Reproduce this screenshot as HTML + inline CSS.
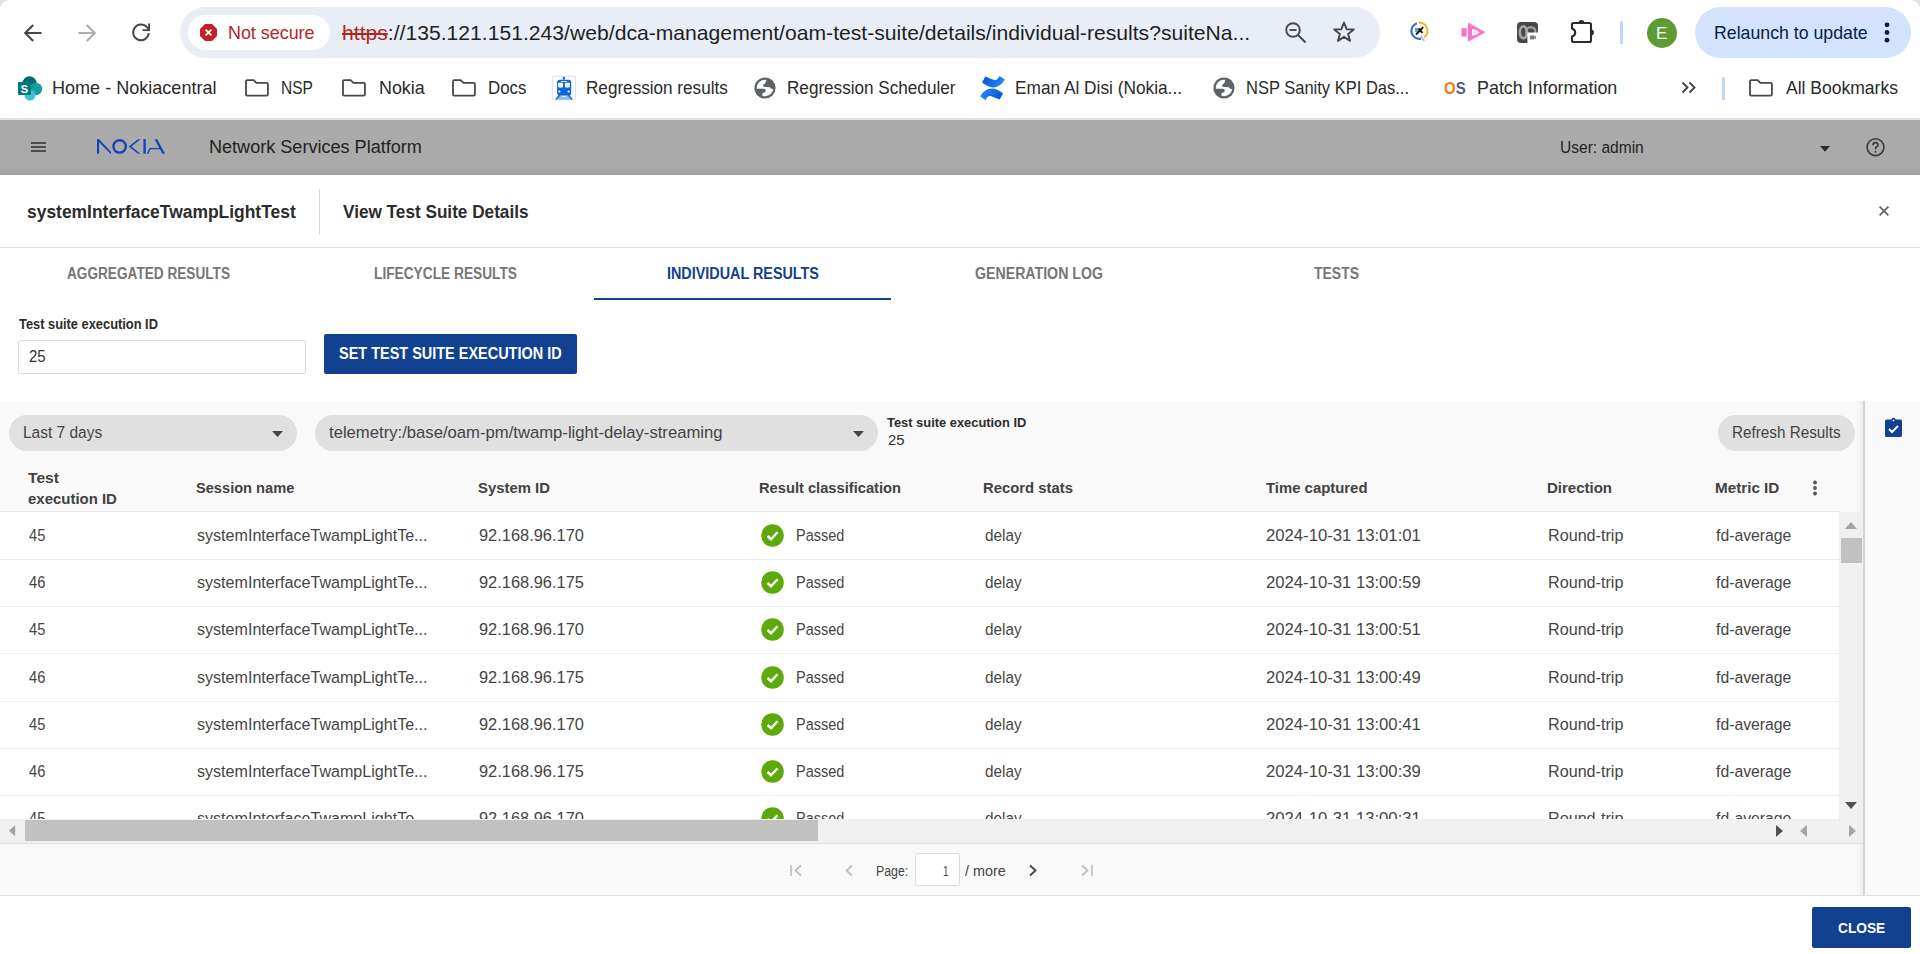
<!DOCTYPE html>
<html><head><meta charset="utf-8">
<style>
html,body{margin:0;padding:0;width:1920px;height:954px;overflow:hidden;background:#fff;}
body{position:relative;font-family:"Liberation Sans",sans-serif;}
.t{position:absolute;white-space:nowrap;font-family:"Liberation Sans",sans-serif;}
.r{position:absolute;}
svg{position:absolute;overflow:visible;}
</style></head><body>
<div class="r" style="left:0px;top:0px;width:9px;height:9px;background:radial-gradient(circle at 9px 9px,#fff 8.2px,#dde3ea 9.2px);"></div>
<div class="r" style="left:1911px;top:0px;width:9px;height:9px;background:radial-gradient(circle at 0px 9px,#fff 8.2px,#dde3ea 9.2px);"></div>
<svg style="left:23px;top:23.5px" width="20" height="19" viewBox="0 0 20 19"><path d="M18.6 9H2.2M10.2 1L2.2 9L10.2 17" fill="none" stroke="#474747" stroke-width="2.1"/></svg>
<svg style="left:77px;top:23.5px" width="20" height="19" viewBox="0 0 20 19"><path d="M1.4 9H17.8M9.8 1L17.8 9L9.8 17" fill="none" stroke="#adadad" stroke-width="2.1"/></svg>
<svg style="left:126px;top:18px" width="30" height="28" viewBox="0 0 30 28"><path d="M22.81 15.22A7.85 7.85 0 1 1 21.01 9.35" fill="none" stroke="#474747" stroke-width="1.9"/><path d="M23.1 5.6V12.1H16.5" fill="none" stroke="#474747" stroke-width="1.9"/><path d="M19.6 9.6L23.5 12.6V8.2Z" fill="#474747"/></svg>
<div class="r" style="left:180px;top:7px;width:1200px;height:51px;background:#e9eef6;border-radius:26px;"></div>
<div class="r" style="left:188px;top:15px;width:142px;height:35px;background:#ffffff;border-radius:18px;"></div>
<svg style="left:200px;top:24px" width="17" height="17" viewBox="0 0 17 17"><path d="M5 0H12L17 5V12L12 17H5L0 12V5Z" fill="#c5221f"/><path d="M5.6 5.6L11.4 11.4M11.4 5.6L5.6 11.4" stroke="#fff" stroke-width="1.8"/></svg>
<div class="t" style="left:227.50px;top:24.00px;font-size:18.5px;line-height:18.5px;font-weight:400;color:#b3261e;transform:scaleX(0.9670);transform-origin:0 0;">Not secure</div>
<div class="t" style="left:342.00px;top:23.00px;font-size:20.3px;line-height:20.3px;font-weight:400;color:#1f1f1f;transform:scaleX(1.0421);transform-origin:0 0;"><span style="color:#b3261e;text-decoration:line-through;">https</span>://135.121.151.243/web/dca-management/oam-test-suite/details/individual-results?suiteNa...</div>
<svg style="left:1285px;top:22px" width="22" height="21" viewBox="0 0 22 21"><circle cx="8" cy="8" r="6.8" fill="none" stroke="#474747" stroke-width="1.9"/><path d="M4.5 8H11.5" stroke="#474747" stroke-width="1.9"/><path d="M13 13L20.5 20.5" stroke="#474747" stroke-width="2"/></svg>
<svg style="left:1332px;top:21px" width="24" height="22" viewBox="0 0 24 22"><path d="M12 1.5L14.6 8.2L21.8 8.4L16.1 12.9L18.1 19.9L12 15.9L5.9 19.9L7.9 12.9L2.2 8.4L9.4 8.2Z" fill="none" stroke="#474747" stroke-width="1.9" stroke-linejoin="round"/></svg>
<svg style="left:1404px;top:16px" width="32" height="32" viewBox="0 0 32 32"><path d="M14.6 6.85A8 8 0 0 1 19.99 21.35" fill="none" stroke="#f7b928" stroke-width="2.1"/><path d="M17.06 22.63A8 8 0 0 1 12.9 7.2" fill="none" stroke="#2f6fd6" stroke-width="2.1"/><path d="M11 12H13.5L14.6 14L13.5 15.8H11Z" fill="#3aa3f2"/><path d="M12 18.5L19.2 11.2M14.5 12.5L18.5 16.8" stroke="#111" stroke-width="1.9"/><path d="M16.5 19.5L20.3 25" stroke="#b8bcc4" stroke-width="1.6"/></svg>
<svg style="left:1461px;top:22px" width="25" height="21" viewBox="0 0 25 21"><path d="M0.5 6.2H5.7V14.6H0.5Z" fill="#f774c8"/><path d="M7 0.5L24.4 10.2L7 19.8Z" fill="#f774c8"/><path d="M11 7.3H13.6V13.5H11Z M14.2 7.3L18.5 10.3L14.2 13.5Z" fill="#fff"/></svg>
<svg style="left:1512px;top:16px" width="32" height="32" viewBox="0 0 32 32"><rect x="5" y="5.9" width="21" height="21" rx="4" fill="#474747"/><ellipse cx="18.8" cy="15.6" rx="4.6" ry="4.4" fill="none" stroke="#9c9c9c" stroke-width="2.4"/><ellipse cx="11.4" cy="16.3" rx="3.6" ry="5.9" fill="none" stroke="#a4a4a4" stroke-width="2.6"/><path d="M15.4 16.4H26.6V24.8Q26.6 27.2 24.2 27.2H15.4Z" fill="#fff"/><rect x="18" y="19.4" width="4.3" height="4" fill="#7a7a7a"/><path d="M22.3 20.4L23.9 19.6V23.2L22.3 22.4Z" fill="#7a7a7a"/></svg>
<svg style="left:1570px;top:18px" width="26" height="26" viewBox="0 0 26 26"><path d="M3.5 5H19.5Q21 5 21 6.5V22.5Q21 24 19.5 24H3.5Q2 24 2 22.5V18.6Q5.2 17.6 5.2 14.5Q5.2 11.4 2 10.4V6.5Q2 5 3.5 5Z" fill="none" stroke="#2b2b2b" stroke-width="2.1" stroke-linejoin="round"/><path d="M8.6 5A2.9 2.9 0 0 1 14.4 5Z M21 11.6A2.9 2.9 0 0 1 21 17.4Z" fill="#2b2b2b"/></svg>
<div class="r" style="left:1620px;top:21px;width:3px;height:23px;background:#c2d6f7;border-radius:1px;"></div>
<div class="r" style="left:1647px;top:18px;width:30px;height:30px;background:#5e9c33;border-radius:50%;"></div>
<div class="t" style="left:1656.00px;top:25.00px;font-size:17px;line-height:17px;font-weight:400;color:#ffffff;">E</div>
<div class="r" style="left:1695px;top:7px;width:216px;height:51px;background:#d3e3fd;border-radius:26px;"></div>
<div class="t" style="left:1713.80px;top:24.00px;font-size:18.5px;line-height:18.5px;font-weight:400;color:#041e49;transform:scaleX(0.9579);transform-origin:0 0;">Relaunch to update</div>
<svg style="left:1884px;top:22px" width="6" height="21" viewBox="0 0 6 21"><circle cx="3" cy="2.8" r="2.4" fill="#041e49"/><circle cx="3" cy="10.5" r="2.4" fill="#041e49"/><circle cx="3" cy="18.2" r="2.4" fill="#041e49"/></svg>
<svg style="left:18px;top:76px" width="25" height="25" viewBox="0 0 25 25"><circle cx="11.5" cy="7.5" r="7.2" fill="#036c70"/><circle cx="18" cy="13" r="6.2" fill="#1a9ba1"/><circle cx="12" cy="19" r="5.5" fill="#37c6d0"/><rect x="0" y="6" width="13" height="13" rx="1" fill="#03787c"/><text x="6.5" y="16.5" font-family="Liberation Sans" font-weight="700" font-size="11" fill="#fff" text-anchor="middle">S</text></svg>
<div class="t" style="left:51.50px;top:79.00px;font-size:18.5px;line-height:18.5px;font-weight:400;color:#2a2a2a;transform:scaleX(0.9757);transform-origin:0 0;">Home - Nokiacentral</div>
<svg style="left:245px;top:79px" width="25" height="19" viewBox="0 0 25 19"><path d="M1 2.3Q1 1.1 2.2 1.1H8.6L11.4 3.9H21.7Q22.9 3.9 22.9 5.1V15.4Q22.9 16.6 21.7 16.6H2.2Q1 16.6 1 15.4Z" fill="none" stroke="#474747" stroke-width="1.8" stroke-linejoin="round"/></svg>
<div class="t" style="left:281.30px;top:79.00px;font-size:18.5px;line-height:18.5px;font-weight:400;color:#2a2a2a;transform:scaleX(0.8357);transform-origin:0 0;">NSP</div>
<svg style="left:342px;top:79px" width="25" height="19" viewBox="0 0 25 19"><path d="M1 2.3Q1 1.1 2.2 1.1H8.6L11.4 3.9H21.7Q22.9 3.9 22.9 5.1V15.4Q22.9 16.6 21.7 16.6H2.2Q1 16.6 1 15.4Z" fill="none" stroke="#474747" stroke-width="1.8" stroke-linejoin="round"/></svg>
<div class="t" style="left:378.50px;top:79.00px;font-size:18.5px;line-height:18.5px;font-weight:400;color:#2a2a2a;transform:scaleX(0.9662);transform-origin:0 0;">Nokia</div>
<svg style="left:452px;top:79px" width="25" height="19" viewBox="0 0 25 19"><path d="M1 2.3Q1 1.1 2.2 1.1H8.6L11.4 3.9H21.7Q22.9 3.9 22.9 5.1V15.4Q22.9 16.6 21.7 16.6H2.2Q1 16.6 1 15.4Z" fill="none" stroke="#474747" stroke-width="1.8" stroke-linejoin="round"/></svg>
<div class="t" style="left:488.30px;top:79.00px;font-size:18.5px;line-height:18.5px;font-weight:400;color:#2a2a2a;transform:scaleX(0.9110);transform-origin:0 0;">Docs</div>
<svg style="left:548px;top:72px" width="32" height="32" viewBox="0 0 32 32"><rect x="4.3" y="4.3" width="23.4" height="23.4" rx="1.2" fill="#fff" stroke="#c9dcf6" stroke-width="0.9"/><path d="M12 23.5H20L22.5 27.8H9.5Z" fill="#8fb9ea"/><path d="M11.8 23L8 27.6M20.2 23L24 27.6" stroke="#0b66d8" stroke-width="1.6"/><circle cx="15.9" cy="6" r="1.2" fill="#0b66d8"/><rect x="15.4" y="6" width="1" height="2" fill="#0b66d8"/><rect x="9.1" y="7.7" width="14.1" height="15.8" rx="2.6" fill="#0b66d8"/><rect x="10.1" y="10.7" width="4.9" height="4.7" rx="0.9" fill="#fff"/><rect x="16.9" y="10.7" width="4.9" height="4.7" rx="0.9" fill="#fff"/><rect x="13" y="9" width="5.8" height="0.9" fill="#fff"/><circle cx="11.4" cy="19.5" r="1.1" fill="#fff"/><circle cx="20.6" cy="19.5" r="1.1" fill="#fff"/><rect x="14" y="24" width="4" height="0.8" fill="#fff"/></svg>
<div class="t" style="left:585.50px;top:79.00px;font-size:18.5px;line-height:18.5px;font-weight:400;color:#2a2a2a;transform:scaleX(0.9256);transform-origin:0 0;">Regression results</div>
<svg style="left:754.1px;top:76.6px" width="22" height="22" viewBox="0 0 22 22"><defs><clipPath id="gc754"><circle cx="11" cy="11" r="9"/></clipPath></defs><circle cx="11" cy="11" r="10.6" fill="#5f6368"/><circle cx="11" cy="11" r="8.3" fill="#fff"/><g clip-path="url(#gc754)" fill="#5f6368"><g transform="translate(0.5,0.5)"><path d="M8.6 8.2Q8.6 6.4 10.6 5.9L12 2.5H21V11.2Q20 11.8 17.8 11.6Q16 11.5 15.5 9.8Q13.5 9.3 10.5 9.4Q8.6 9.4 8.6 8.2Z"/><path d="M0 11.2H9.5Q11.3 11.4 11.2 13.5Q11.1 15.2 9.2 15.3Q7.8 15.5 7.8 17.2V21H0Z"/></g></g></svg>
<div class="t" style="left:786.80px;top:79.00px;font-size:18.5px;line-height:18.5px;font-weight:400;color:#2a2a2a;transform:scaleX(0.9253);transform-origin:0 0;">Regression Scheduler</div>
<svg style="left:975px;top:72px" width="35" height="32" viewBox="0 0 35 32"><defs><linearGradient id="cfa" x1="0" y1="0" x2="1" y2="0.3"><stop offset="0" stop-color="#0052cc"/><stop offset="1" stop-color="#2684ff"/></linearGradient><linearGradient id="cfb" x1="1" y1="1" x2="0" y2="0.7"><stop offset="0" stop-color="#0052cc"/><stop offset="1" stop-color="#2684ff"/></linearGradient></defs><path d="M10.3 4.4Q15 6.5 19.5 8Q22.5 8.5 24.4 4.1L29.8 7.6Q25.5 15.5 18 15.4Q13 15.2 7 10.6Z" fill="url(#cfa)"/><path d="M24.7 27.6Q20 25.5 15.5 24Q12.5 23.5 10.6 27.9L5.2 24.4Q9.5 16.5 17 16.6Q22 16.8 28 21.4Z" fill="url(#cfb)"/></svg>
<div class="t" style="left:1015.00px;top:79.00px;font-size:18.5px;line-height:18.5px;font-weight:400;color:#2a2a2a;transform:scaleX(0.9335);transform-origin:0 0;">Eman Al Disi (Nokia...</div>
<svg style="left:1213.1px;top:76.6px" width="22" height="22" viewBox="0 0 22 22"><defs><clipPath id="gc1213"><circle cx="11" cy="11" r="9"/></clipPath></defs><circle cx="11" cy="11" r="10.6" fill="#5f6368"/><circle cx="11" cy="11" r="8.3" fill="#fff"/><g clip-path="url(#gc1213)" fill="#5f6368"><g transform="translate(0.5,0.5)"><path d="M8.6 8.2Q8.6 6.4 10.6 5.9L12 2.5H21V11.2Q20 11.8 17.8 11.6Q16 11.5 15.5 9.8Q13.5 9.3 10.5 9.4Q8.6 9.4 8.6 8.2Z"/><path d="M0 11.2H9.5Q11.3 11.4 11.2 13.5Q11.1 15.2 9.2 15.3Q7.8 15.5 7.8 17.2V21H0Z"/></g></g></svg>
<div class="t" style="left:1245.50px;top:79.00px;font-size:18.5px;line-height:18.5px;font-weight:400;color:#2a2a2a;transform:scaleX(0.8922);transform-origin:0 0;">NSP Sanity KPI Das...</div>
<div class="t" style="left:1444.00px;top:81.00px;font-size:16.8px;line-height:16.8px;font-weight:700;color:#ee7d1c;transform:scaleX(0.8948);transform-origin:0 0;"><span style="color:#ee7d1c">O</span><span style="color:#4c6382">S</span></div>
<div class="t" style="left:1476.70px;top:79.00px;font-size:18.5px;line-height:18.5px;font-weight:400;color:#2a2a2a;transform:scaleX(0.9676);transform-origin:0 0;">Patch Information</div>
<svg style="left:1681px;top:81px" width="15" height="13" viewBox="0 0 15 13"><path d="M1.5 1.5L6.5 6.5L1.5 11.5M8.5 1.5L13.5 6.5L8.5 11.5" fill="none" stroke="#474747" stroke-width="1.9"/></svg>
<div class="r" style="left:1722px;top:77px;width:3px;height:23px;background:#c2d6f7;border-radius:1px;"></div>
<svg style="left:1748.5px;top:79px" width="25" height="19" viewBox="0 0 25 19"><path d="M1 2.3Q1 1.1 2.2 1.1H8.6L11.4 3.9H21.7Q22.9 3.9 22.9 5.1V15.4Q22.9 16.6 21.7 16.6H2.2Q1 16.6 1 15.4Z" fill="none" stroke="#474747" stroke-width="1.8" stroke-linejoin="round"/></svg>
<div class="t" style="left:1785.50px;top:79.00px;font-size:18.5px;line-height:18.5px;font-weight:400;color:#2a2a2a;transform:scaleX(0.9471);transform-origin:0 0;">All Bookmarks</div>
<div class="r" style="left:0px;top:118px;width:1920px;height:2px;background:#e3e3e3;"></div>
<div class="r" style="left:0px;top:120px;width:1920px;height:55px;background:linear-gradient(#ababab 0%,#aaaaaa 85%,#9f9f9f 100%);"></div>
<div class="r" style="left:31px;top:142px;width:15px;height:2px;background:#4d4d4d;"></div>
<div class="r" style="left:31px;top:146px;width:15px;height:2px;background:#4d4d4d;"></div>
<div class="r" style="left:31px;top:150px;width:15px;height:2px;background:#4d4d4d;"></div>
<svg style="left:90px;top:132px" width="82" height="30" viewBox="0 0 82 30"><path d="M7 21.8V7L8.8 7L21 19.8V21.8H20.5L9.1 10.2V21.8Z" fill="#1444bd"/><circle cx="29.6" cy="14.4" r="6.2" fill="none" stroke="#1444bd" stroke-width="2.4"/><path d="M50.6 7.2H48L38.8 14.5L48 21.8H50.4L41.3 14.5Z" fill="#1444bd"/><rect x="53.4" y="7.1" width="2.4" height="14.7" fill="#1444bd"/><path d="M64.6 7.2H67.2L75 21.8H72.4Z M59.6 15.9H69.3L70.3 17.2H60.5L58.5 21.8H56.7Z" fill="#1444bd"/></svg>
<div class="t" style="left:208.60px;top:138.00px;font-size:18.9px;line-height:18.9px;font-weight:400;color:#222;transform:scaleX(0.9567);transform-origin:0 0;">Network Services Platform</div>
<div class="t" style="left:1560.25px;top:140.00px;font-size:16.9px;line-height:16.9px;font-weight:400;color:#222;transform:scaleX(0.9199);transform-origin:0 0;">User: admin</div>
<svg style="left:1819.5px;top:145.5px" width="10" height="6" viewBox="0 0 10 6"><path d="M0 0H10L5 5.8Z" fill="#2a2a2a"/></svg>
<svg style="left:1865px;top:137px" width="21" height="21" viewBox="0 0 21 21"><circle cx="10.5" cy="10.2" r="8.4" fill="none" stroke="#3a3a3a" stroke-width="1.6"/><path d="M8 8.2Q8 5.6 10.5 5.6Q13 5.6 13 7.8Q13 9.2 11.4 10Q10.5 10.5 10.5 12V12.3" fill="none" stroke="#3a3a3a" stroke-width="1.6"/><circle cx="10.5" cy="14.8" r="1" fill="#3a3a3a"/></svg>
<div class="t" style="left:27.00px;top:203.00px;font-size:18.8px;line-height:18.8px;font-weight:700;color:#2c2c2c;transform:scaleX(0.9284);transform-origin:0 0;">systemInterfaceTwampLightTest</div>
<div class="r" style="left:319px;top:189px;width:1px;height:45px;background:#d8d8d8;"></div>
<div class="t" style="left:342.80px;top:203.00px;font-size:18.8px;line-height:18.8px;font-weight:700;color:#2c2c2c;transform:scaleX(0.9146);transform-origin:0 0;">View Test Suite Details</div>
<svg style="left:1879.2px;top:206.2px" width="10" height="10" viewBox="0 0 10 10"><path d="M0.6 0.6L9.4 9.4M9.4 0.6L0.6 9.4" stroke="#666" stroke-width="1.8"/></svg>
<div class="r" style="left:0px;top:247px;width:1920px;height:1px;background:#e0e0e0;"></div>
<div class="t" style="left:66.80px;top:266.00px;font-size:15.8px;line-height:15.8px;font-weight:700;color:#767676;transform:scaleX(0.8624);transform-origin:0 0;">AGGREGATED RESULTS</div>
<div class="t" style="left:373.80px;top:266.00px;font-size:15.8px;line-height:15.8px;font-weight:700;color:#767676;transform:scaleX(0.8680);transform-origin:0 0;">LIFECYCLE RESULTS</div>
<div class="t" style="left:666.70px;top:266.00px;font-size:15.8px;line-height:15.8px;font-weight:700;color:#124191;transform:scaleX(0.9096);transform-origin:0 0;">INDIVIDUAL RESULTS</div>
<div class="t" style="left:975.40px;top:266.00px;font-size:15.8px;line-height:15.8px;font-weight:700;color:#767676;transform:scaleX(0.8964);transform-origin:0 0;">GENERATION LOG</div>
<div class="t" style="left:1314.00px;top:266.00px;font-size:15.8px;line-height:15.8px;font-weight:700;color:#767676;transform:scaleX(0.8841);transform-origin:0 0;">TESTS</div>
<div class="r" style="left:594px;top:298px;width:297px;height:2px;background:#124191;"></div>
<div class="t" style="left:18.80px;top:317.00px;font-size:14.8px;line-height:14.8px;font-weight:700;color:#2c2c2c;transform:scaleX(0.8682);transform-origin:0 0;">Test suite execution ID</div>
<div class="r" style="left:18px;top:340px;width:288px;height:34px;background:#fff;box-sizing:border-box;border:1px solid #dadada;border-radius:2px;"></div>
<div class="t" style="left:28.80px;top:348.00px;font-size:16.3px;line-height:16.3px;font-weight:400;color:#333;transform:scaleX(0.9201);transform-origin:0 0;">25</div>
<div class="r" style="left:324px;top:334px;width:253px;height:40px;background:#124191;border-radius:2px;"></div>
<div class="t" style="left:339.40px;top:346.00px;font-size:16px;line-height:16px;font-weight:700;color:#fff;transform:scaleX(0.9040);transform-origin:0 0;">SET TEST SUITE EXECUTION ID</div>
<div class="r" style="left:0px;top:401px;width:1864px;height:494px;background:#f9f9f9;"></div>
<div class="r" style="left:1864px;top:401px;width:56px;height:494px;background:#f9f9f9;"></div>
<div class="r" style="left:1857px;top:401px;width:6px;height:494px;background:linear-gradient(90deg,rgba(0,0,0,0),rgba(0,0,0,0.05));"></div>
<div class="r" style="left:1863px;top:401px;width:2px;height:494px;background:#d4d4d4;"></div>
<div class="r" style="left:9px;top:415px;width:288px;height:36px;background:#e0e0e0;border-radius:18px;"></div>
<div class="t" style="left:23.00px;top:424.00px;font-size:16.3px;line-height:16.3px;font-weight:400;color:#444;transform:scaleX(0.9514);transform-origin:0 0;">Last 7 days</div>
<svg style="left:272px;top:431px" width="11" height="6" viewBox="0 0 11 6"><path d="M0 0H11L5.5 6Z" fill="#444"/></svg>
<div class="r" style="left:315px;top:415px;width:563px;height:36px;background:#e0e0e0;border-radius:18px;"></div>
<div class="t" style="left:329.00px;top:424.00px;font-size:16.3px;line-height:16.3px;font-weight:400;color:#444;transform:scaleX(1.0234);transform-origin:0 0;">telemetry:/base/oam-pm/twamp-light-delay-streaming</div>
<svg style="left:853px;top:431px" width="11" height="6" viewBox="0 0 11 6"><path d="M0 0H11L5.5 6Z" fill="#444"/></svg>
<div class="t" style="left:887.30px;top:416.00px;font-size:13.4px;line-height:13.4px;font-weight:700;color:#2c2c2c;transform:scaleX(0.9617);transform-origin:0 0;">Test suite execution ID</div>
<div class="t" style="left:887.50px;top:432.00px;font-size:15.3px;line-height:15.3px;font-weight:400;color:#333;transform:scaleX(0.9706);transform-origin:0 0;">25</div>
<div class="r" style="left:1718px;top:415px;width:137px;height:36px;background:#e0e0e0;border-radius:18px;"></div>
<div class="t" style="left:1732.00px;top:424.00px;font-size:16.3px;line-height:16.3px;font-weight:400;color:#444;transform:scaleX(0.9375);transform-origin:0 0;">Refresh Results</div>
<svg style="left:1885px;top:418px" width="17" height="19" viewBox="0 0 17 19"><rect x="0" y="1.5" width="17" height="17.5" rx="1.6" fill="#124191"/><circle cx="8.5" cy="1.8" r="2" fill="#124191"/><circle cx="8.5" cy="2.6" r="0.9" fill="#fff"/><path d="M4 11L7 14L13 8" fill="none" stroke="#fff" stroke-width="2"/></svg>
<div class="t" style="left:27.70px;top:470.00px;font-size:15.3px;line-height:15.3px;font-weight:700;color:#424242;transform:scaleX(1.0214);transform-origin:0 0;">Test</div>
<div class="t" style="left:27.70px;top:491.00px;font-size:15.3px;line-height:15.3px;font-weight:700;color:#424242;transform:scaleX(0.9775);transform-origin:0 0;">execution ID</div>
<div class="t" style="left:196.20px;top:480.00px;font-size:15.3px;line-height:15.3px;font-weight:700;color:#424242;transform:scaleX(0.9553);transform-origin:0 0;">Session name</div>
<div class="t" style="left:477.50px;top:480.00px;font-size:15.3px;line-height:15.3px;font-weight:700;color:#424242;transform:scaleX(0.9730);transform-origin:0 0;">System ID</div>
<div class="t" style="left:759.20px;top:480.00px;font-size:15.3px;line-height:15.3px;font-weight:700;color:#424242;transform:scaleX(0.9598);transform-origin:0 0;">Result classification</div>
<div class="t" style="left:983.30px;top:480.00px;font-size:15.3px;line-height:15.3px;font-weight:700;color:#424242;transform:scaleX(0.9709);transform-origin:0 0;">Record stats</div>
<div class="t" style="left:1265.70px;top:480.00px;font-size:15.3px;line-height:15.3px;font-weight:700;color:#424242;transform:scaleX(0.9732);transform-origin:0 0;">Time captured</div>
<div class="t" style="left:1546.70px;top:480.00px;font-size:15.3px;line-height:15.3px;font-weight:700;color:#424242;transform:scaleX(0.9804);transform-origin:0 0;">Direction</div>
<div class="t" style="left:1715.30px;top:480.00px;font-size:15.3px;line-height:15.3px;font-weight:700;color:#424242;transform:scaleX(0.9954);transform-origin:0 0;">Metric ID</div>
<svg style="left:1812px;top:480px" width="6" height="16" viewBox="0 0 6 16"><circle cx="3" cy="2.5" r="1.9" fill="#555"/><circle cx="3" cy="8" r="1.9" fill="#555"/><circle cx="3" cy="13.5" r="1.9" fill="#555"/></svg>
<div class="r" style="left:0px;top:511px;width:1839px;height:1px;background:#e8e8e8;"></div>
<div style="position:absolute;left:0;top:512px;width:1839px;height:307px;overflow:hidden;background:#fff;">
<div class="t" style="left:28.90px;top:15.00px;font-size:16.3px;line-height:16.3px;font-weight:400;color:#454545;transform:scaleX(0.9036);transform-origin:0 0;">45</div>
<div class="t" style="left:197.10px;top:15.00px;font-size:16.3px;line-height:16.3px;font-weight:400;color:#454545;transform:scaleX(0.9874);transform-origin:0 0;">systemInterfaceTwampLightTe...</div>
<div class="t" style="left:478.60px;top:15.00px;font-size:16.3px;line-height:16.3px;font-weight:400;color:#454545;transform:scaleX(1.0072);transform-origin:0 0;">92.168.96.170</div>
<svg style="left:761px;top:12px" width="23" height="23" viewBox="0 0 23 23"><circle cx="11.5" cy="11.5" r="11.3" fill="#5fa80a"/><path d="M6.5 12L10 15.2L16.5 8.3" fill="none" stroke="#fff" stroke-width="2.4"/></svg>
<div class="t" style="left:796.20px;top:15.00px;font-size:16.3px;line-height:16.3px;font-weight:400;color:#454545;transform:scaleX(0.8887);transform-origin:0 0;">Passed</div>
<div class="t" style="left:984.70px;top:15.00px;font-size:16.3px;line-height:16.3px;font-weight:400;color:#454545;transform:scaleX(0.9397);transform-origin:0 0;">delay</div>
<div class="t" style="left:1265.70px;top:15.00px;font-size:16.3px;line-height:16.3px;font-weight:400;color:#454545;transform:scaleX(1.0241);transform-origin:0 0;">2024-10-31 13:01:01</div>
<div class="t" style="left:1547.60px;top:15.00px;font-size:16.3px;line-height:16.3px;font-weight:400;color:#454545;transform:scaleX(0.9921);transform-origin:0 0;">Round-trip</div>
<div class="t" style="left:1716.20px;top:15.00px;font-size:16.3px;line-height:16.3px;font-weight:400;color:#454545;transform:scaleX(0.9686);transform-origin:0 0;">fd-average</div>
<div class="r" style="left:0px;top:47px;width:1839px;height:1px;background:#ececec;"></div>
<div class="t" style="left:28.90px;top:62.00px;font-size:16.3px;line-height:16.3px;font-weight:400;color:#454545;transform:scaleX(0.9036);transform-origin:0 0;">46</div>
<div class="t" style="left:197.10px;top:62.00px;font-size:16.3px;line-height:16.3px;font-weight:400;color:#454545;transform:scaleX(0.9874);transform-origin:0 0;">systemInterfaceTwampLightTe...</div>
<div class="t" style="left:478.60px;top:62.00px;font-size:16.3px;line-height:16.3px;font-weight:400;color:#454545;transform:scaleX(1.0072);transform-origin:0 0;">92.168.96.175</div>
<svg style="left:761px;top:59px" width="23" height="23" viewBox="0 0 23 23"><circle cx="11.5" cy="11.5" r="11.3" fill="#5fa80a"/><path d="M6.5 12L10 15.2L16.5 8.3" fill="none" stroke="#fff" stroke-width="2.4"/></svg>
<div class="t" style="left:796.20px;top:62.00px;font-size:16.3px;line-height:16.3px;font-weight:400;color:#454545;transform:scaleX(0.8887);transform-origin:0 0;">Passed</div>
<div class="t" style="left:984.70px;top:62.00px;font-size:16.3px;line-height:16.3px;font-weight:400;color:#454545;transform:scaleX(0.9397);transform-origin:0 0;">delay</div>
<div class="t" style="left:1265.70px;top:62.00px;font-size:16.3px;line-height:16.3px;font-weight:400;color:#454545;transform:scaleX(1.0241);transform-origin:0 0;">2024-10-31 13:00:59</div>
<div class="t" style="left:1547.60px;top:62.00px;font-size:16.3px;line-height:16.3px;font-weight:400;color:#454545;transform:scaleX(0.9921);transform-origin:0 0;">Round-trip</div>
<div class="t" style="left:1716.20px;top:62.00px;font-size:16.3px;line-height:16.3px;font-weight:400;color:#454545;transform:scaleX(0.9686);transform-origin:0 0;">fd-average</div>
<div class="r" style="left:0px;top:94px;width:1839px;height:1px;background:#ececec;"></div>
<div class="t" style="left:28.90px;top:109.00px;font-size:16.3px;line-height:16.3px;font-weight:400;color:#454545;transform:scaleX(0.9036);transform-origin:0 0;">45</div>
<div class="t" style="left:197.10px;top:109.00px;font-size:16.3px;line-height:16.3px;font-weight:400;color:#454545;transform:scaleX(0.9874);transform-origin:0 0;">systemInterfaceTwampLightTe...</div>
<div class="t" style="left:478.60px;top:109.00px;font-size:16.3px;line-height:16.3px;font-weight:400;color:#454545;transform:scaleX(1.0072);transform-origin:0 0;">92.168.96.170</div>
<svg style="left:761px;top:106px" width="23" height="23" viewBox="0 0 23 23"><circle cx="11.5" cy="11.5" r="11.3" fill="#5fa80a"/><path d="M6.5 12L10 15.2L16.5 8.3" fill="none" stroke="#fff" stroke-width="2.4"/></svg>
<div class="t" style="left:796.20px;top:109.00px;font-size:16.3px;line-height:16.3px;font-weight:400;color:#454545;transform:scaleX(0.8887);transform-origin:0 0;">Passed</div>
<div class="t" style="left:984.70px;top:109.00px;font-size:16.3px;line-height:16.3px;font-weight:400;color:#454545;transform:scaleX(0.9397);transform-origin:0 0;">delay</div>
<div class="t" style="left:1265.70px;top:109.00px;font-size:16.3px;line-height:16.3px;font-weight:400;color:#454545;transform:scaleX(1.0241);transform-origin:0 0;">2024-10-31 13:00:51</div>
<div class="t" style="left:1547.60px;top:109.00px;font-size:16.3px;line-height:16.3px;font-weight:400;color:#454545;transform:scaleX(0.9921);transform-origin:0 0;">Round-trip</div>
<div class="t" style="left:1716.20px;top:109.00px;font-size:16.3px;line-height:16.3px;font-weight:400;color:#454545;transform:scaleX(0.9686);transform-origin:0 0;">fd-average</div>
<div class="r" style="left:0px;top:141px;width:1839px;height:1px;background:#ececec;"></div>
<div class="t" style="left:28.90px;top:157.00px;font-size:16.3px;line-height:16.3px;font-weight:400;color:#454545;transform:scaleX(0.9036);transform-origin:0 0;">46</div>
<div class="t" style="left:197.10px;top:157.00px;font-size:16.3px;line-height:16.3px;font-weight:400;color:#454545;transform:scaleX(0.9874);transform-origin:0 0;">systemInterfaceTwampLightTe...</div>
<div class="t" style="left:478.60px;top:157.00px;font-size:16.3px;line-height:16.3px;font-weight:400;color:#454545;transform:scaleX(1.0072);transform-origin:0 0;">92.168.96.175</div>
<svg style="left:761px;top:154px" width="23" height="23" viewBox="0 0 23 23"><circle cx="11.5" cy="11.5" r="11.3" fill="#5fa80a"/><path d="M6.5 12L10 15.2L16.5 8.3" fill="none" stroke="#fff" stroke-width="2.4"/></svg>
<div class="t" style="left:796.20px;top:157.00px;font-size:16.3px;line-height:16.3px;font-weight:400;color:#454545;transform:scaleX(0.8887);transform-origin:0 0;">Passed</div>
<div class="t" style="left:984.70px;top:157.00px;font-size:16.3px;line-height:16.3px;font-weight:400;color:#454545;transform:scaleX(0.9397);transform-origin:0 0;">delay</div>
<div class="t" style="left:1265.70px;top:157.00px;font-size:16.3px;line-height:16.3px;font-weight:400;color:#454545;transform:scaleX(1.0241);transform-origin:0 0;">2024-10-31 13:00:49</div>
<div class="t" style="left:1547.60px;top:157.00px;font-size:16.3px;line-height:16.3px;font-weight:400;color:#454545;transform:scaleX(0.9921);transform-origin:0 0;">Round-trip</div>
<div class="t" style="left:1716.20px;top:157.00px;font-size:16.3px;line-height:16.3px;font-weight:400;color:#454545;transform:scaleX(0.9686);transform-origin:0 0;">fd-average</div>
<div class="r" style="left:0px;top:189px;width:1839px;height:1px;background:#ececec;"></div>
<div class="t" style="left:28.90px;top:204.00px;font-size:16.3px;line-height:16.3px;font-weight:400;color:#454545;transform:scaleX(0.9036);transform-origin:0 0;">45</div>
<div class="t" style="left:197.10px;top:204.00px;font-size:16.3px;line-height:16.3px;font-weight:400;color:#454545;transform:scaleX(0.9874);transform-origin:0 0;">systemInterfaceTwampLightTe...</div>
<div class="t" style="left:478.60px;top:204.00px;font-size:16.3px;line-height:16.3px;font-weight:400;color:#454545;transform:scaleX(1.0072);transform-origin:0 0;">92.168.96.170</div>
<svg style="left:761px;top:201px" width="23" height="23" viewBox="0 0 23 23"><circle cx="11.5" cy="11.5" r="11.3" fill="#5fa80a"/><path d="M6.5 12L10 15.2L16.5 8.3" fill="none" stroke="#fff" stroke-width="2.4"/></svg>
<div class="t" style="left:796.20px;top:204.00px;font-size:16.3px;line-height:16.3px;font-weight:400;color:#454545;transform:scaleX(0.8887);transform-origin:0 0;">Passed</div>
<div class="t" style="left:984.70px;top:204.00px;font-size:16.3px;line-height:16.3px;font-weight:400;color:#454545;transform:scaleX(0.9397);transform-origin:0 0;">delay</div>
<div class="t" style="left:1265.70px;top:204.00px;font-size:16.3px;line-height:16.3px;font-weight:400;color:#454545;transform:scaleX(1.0241);transform-origin:0 0;">2024-10-31 13:00:41</div>
<div class="t" style="left:1547.60px;top:204.00px;font-size:16.3px;line-height:16.3px;font-weight:400;color:#454545;transform:scaleX(0.9921);transform-origin:0 0;">Round-trip</div>
<div class="t" style="left:1716.20px;top:204.00px;font-size:16.3px;line-height:16.3px;font-weight:400;color:#454545;transform:scaleX(0.9686);transform-origin:0 0;">fd-average</div>
<div class="r" style="left:0px;top:236px;width:1839px;height:1px;background:#ececec;"></div>
<div class="t" style="left:28.90px;top:251.00px;font-size:16.3px;line-height:16.3px;font-weight:400;color:#454545;transform:scaleX(0.9036);transform-origin:0 0;">46</div>
<div class="t" style="left:197.10px;top:251.00px;font-size:16.3px;line-height:16.3px;font-weight:400;color:#454545;transform:scaleX(0.9874);transform-origin:0 0;">systemInterfaceTwampLightTe...</div>
<div class="t" style="left:478.60px;top:251.00px;font-size:16.3px;line-height:16.3px;font-weight:400;color:#454545;transform:scaleX(1.0072);transform-origin:0 0;">92.168.96.175</div>
<svg style="left:761px;top:248px" width="23" height="23" viewBox="0 0 23 23"><circle cx="11.5" cy="11.5" r="11.3" fill="#5fa80a"/><path d="M6.5 12L10 15.2L16.5 8.3" fill="none" stroke="#fff" stroke-width="2.4"/></svg>
<div class="t" style="left:796.20px;top:251.00px;font-size:16.3px;line-height:16.3px;font-weight:400;color:#454545;transform:scaleX(0.8887);transform-origin:0 0;">Passed</div>
<div class="t" style="left:984.70px;top:251.00px;font-size:16.3px;line-height:16.3px;font-weight:400;color:#454545;transform:scaleX(0.9397);transform-origin:0 0;">delay</div>
<div class="t" style="left:1265.70px;top:251.00px;font-size:16.3px;line-height:16.3px;font-weight:400;color:#454545;transform:scaleX(1.0241);transform-origin:0 0;">2024-10-31 13:00:39</div>
<div class="t" style="left:1547.60px;top:251.00px;font-size:16.3px;line-height:16.3px;font-weight:400;color:#454545;transform:scaleX(0.9921);transform-origin:0 0;">Round-trip</div>
<div class="t" style="left:1716.20px;top:251.00px;font-size:16.3px;line-height:16.3px;font-weight:400;color:#454545;transform:scaleX(0.9686);transform-origin:0 0;">fd-average</div>
<div class="r" style="left:0px;top:283px;width:1839px;height:1px;background:#ececec;"></div>
<div class="t" style="left:28.90px;top:298.00px;font-size:16.3px;line-height:16.3px;font-weight:400;color:#454545;transform:scaleX(0.9036);transform-origin:0 0;">45</div>
<div class="t" style="left:197.10px;top:298.00px;font-size:16.3px;line-height:16.3px;font-weight:400;color:#454545;transform:scaleX(0.9874);transform-origin:0 0;">systemInterfaceTwampLightTe...</div>
<div class="t" style="left:478.60px;top:298.00px;font-size:16.3px;line-height:16.3px;font-weight:400;color:#454545;transform:scaleX(1.0072);transform-origin:0 0;">92.168.96.170</div>
<svg style="left:761px;top:295px" width="23" height="23" viewBox="0 0 23 23"><circle cx="11.5" cy="11.5" r="11.3" fill="#5fa80a"/><path d="M6.5 12L10 15.2L16.5 8.3" fill="none" stroke="#fff" stroke-width="2.4"/></svg>
<div class="t" style="left:796.20px;top:298.00px;font-size:16.3px;line-height:16.3px;font-weight:400;color:#454545;transform:scaleX(0.8887);transform-origin:0 0;">Passed</div>
<div class="t" style="left:984.70px;top:298.00px;font-size:16.3px;line-height:16.3px;font-weight:400;color:#454545;transform:scaleX(0.9397);transform-origin:0 0;">delay</div>
<div class="t" style="left:1265.70px;top:298.00px;font-size:16.3px;line-height:16.3px;font-weight:400;color:#454545;transform:scaleX(1.0241);transform-origin:0 0;">2024-10-31 13:00:31</div>
<div class="t" style="left:1547.60px;top:298.00px;font-size:16.3px;line-height:16.3px;font-weight:400;color:#454545;transform:scaleX(0.9921);transform-origin:0 0;">Round-trip</div>
<div class="t" style="left:1716.20px;top:298.00px;font-size:16.3px;line-height:16.3px;font-weight:400;color:#454545;transform:scaleX(0.9686);transform-origin:0 0;">fd-average</div>
<div class="r" style="left:0px;top:330px;width:1839px;height:1px;background:#ececec;"></div>
</div>
<div class="r" style="left:1839px;top:512px;width:24px;height:307px;background:#f0f0f0;"></div>
<svg style="left:1845px;top:522px" width="12" height="7" viewBox="0 0 12 7"><path d="M0 7H12L6 0Z" fill="#a3a3a3"/></svg>
<div class="r" style="left:1841px;top:538px;width:21px;height:25px;background:#c1c1c1;"></div>
<svg style="left:1845px;top:802px" width="12" height="7" viewBox="0 0 12 7"><path d="M0 0H12L6 7Z" fill="#505050"/></svg>
<div class="r" style="left:0px;top:819px;width:1863px;height:24px;background:#f0f0f0;"></div>
<svg style="left:8.8px;top:824.8px" width="6.2" height="11.3" viewBox="0 0 6.2 11.3"><path d="M6.2 0V11.3L0 5.65Z" fill="#a3a3a3"/></svg>
<div class="r" style="left:25px;top:820px;width:793px;height:21px;background:#c1c1c1;"></div>
<svg style="left:1776px;top:825px" width="7" height="12" viewBox="0 0 7 12"><path d="M0 0V12L7 6Z" fill="#505050"/></svg>
<svg style="left:1800px;top:825px" width="7" height="12" viewBox="0 0 7 12"><path d="M7 0V12L0 6Z" fill="#a3a3a3"/></svg>
<svg style="left:1849px;top:825px" width="7" height="12" viewBox="0 0 7 12"><path d="M0 0V12L7 6Z" fill="#a3a3a3"/></svg>
<div class="r" style="left:0px;top:843px;width:1863px;height:1px;background:#e0e0e0;"></div>
<svg style="left:790px;top:865px" width="12" height="11" viewBox="0 0 12 11"><path d="M1 0V11" stroke="#bdbdbd" stroke-width="1.6"/><path d="M11 0.5L5.5 5.5L11 10.5" fill="none" stroke="#bdbdbd" stroke-width="1.8"/></svg>
<svg style="left:845px;top:865px" width="8" height="11" viewBox="0 0 8 11"><path d="M7 0.5L1.5 5.5L7 10.5" fill="none" stroke="#bdbdbd" stroke-width="1.8"/></svg>
<div class="t" style="left:876.30px;top:863.00px;font-size:15.4px;line-height:15.4px;font-weight:400;color:#444;transform:scaleX(0.8000);transform-origin:0 0;">Page:</div>
<div class="r" style="left:915px;top:853px;width:45px;height:33px;background:#fff;box-sizing:border-box;border:1px solid #dcdcdc;border-radius:2px;"></div>
<div class="t" style="left:942.50px;top:863.00px;font-size:15.4px;line-height:15.4px;font-weight:400;color:#444;transform:scaleX(0.6433);transform-origin:0 0;">1</div>
<div class="t" style="left:964.80px;top:863.00px;font-size:15.4px;line-height:15.4px;font-weight:400;color:#444;transform:scaleX(0.9324);transform-origin:0 0;">/ more</div>
<svg style="left:1029px;top:865px" width="8" height="11" viewBox="0 0 8 11"><path d="M1 0.5L6.5 5.5L1 10.5" fill="none" stroke="#444" stroke-width="1.8"/></svg>
<svg style="left:1081px;top:865px" width="12" height="11" viewBox="0 0 12 11"><path d="M11 0V11" stroke="#bdbdbd" stroke-width="1.6"/><path d="M1 0.5L6.5 5.5L1 10.5" fill="none" stroke="#bdbdbd" stroke-width="1.8"/></svg>
<div class="r" style="left:0px;top:895px;width:1920px;height:1px;background:#e0e0e0;"></div>
<div class="r" style="left:1812px;top:907px;width:99px;height:41px;background:#124191;border-radius:2px;"></div>
<div class="t" style="left:1838.40px;top:920.00px;font-size:15.5px;line-height:15.5px;font-weight:700;color:#fff;transform:scaleX(0.8839);transform-origin:0 0;">CLOSE</div>
</body></html>
